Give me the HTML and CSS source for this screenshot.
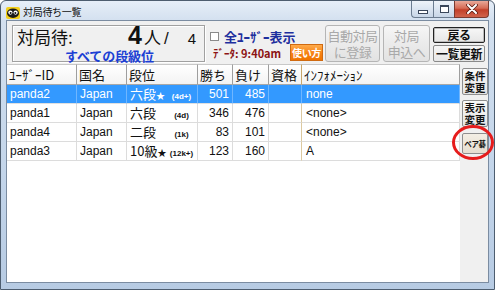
FILE: index.html
```html
<!DOCTYPE html>
<html lang="ja">
<head>
<meta charset="utf-8">
<title>対局待ち一覧</title>
<link rel="stylesheet" href="styles.css">
</head>
<body>
<div class="window">
  <div class="titlebar">
    <div class="app-icon">
      <svg width="14" height="12" viewBox="0 0 14 12">
        <rect x="0" y="0" width="14" height="12" rx="2" fill="#f2cf1c"/>
        <ellipse cx="7" cy="6.2" rx="6" ry="4.8" fill="#1a1a1a"/>
        <circle cx="4.4" cy="5.6" r="2.1" fill="#fff"/>
        <circle cx="9.6" cy="5.6" r="2.1" fill="#fff"/>
        <circle cx="4.6" cy="5.9" r="1" fill="#111"/>
        <circle cx="9.4" cy="5.9" r="1" fill="#111"/>
      </svg>
    </div>
    <div class="title">対局待ち一覧</div>
    <div class="caption-btns">
      <div class="cbtn cmin"><span class="min-glyph"></span></div>
      <div class="cbtn cmax"><span class="max-glyph"></span></div>
      <div class="cbtn cclose">
        <svg width="12" height="10" viewBox="0 0 12 10">
          <path d="M2 1 L10 9 M10 1 L2 9" stroke="#5a1c14" stroke-width="3.6" stroke-linecap="round"/>
          <path d="M2 1 L10 9 M10 1 L2 9" stroke="#fff" stroke-width="2" stroke-linecap="round"/>
        </svg>
      </div>
    </div>
  </div>

  <div class="client">
    <div class="toppanel">
      <div class="waitbox">
        <div class="waitline">
          <span class="wl">対局待:</span>
          <span class="count">4</span>
          <span class="nin">人</span>
          <span class="slash">/</span>
          <span class="total">4</span>
        </div>
        <div class="alldan">すべての段級位</div>
      </div>
      <div class="options">
        <div class="chk"><span class="box"></span><span class="chk-label">全ﾕｰｻﾞｰ表示</span></div>
        <div class="dataline">
          <span class="datatime">ﾃﾞｰﾀ: 9:40am</span>
          <span class="howto">使い方</span>
        </div>
      </div>
      <div class="bigbtn auto">自動対局<br>に登録</div>
      <div class="bigbtn apply">対局<br>申込へ</div>
      <div class="stack">
        <div class="sbtn default">戻る</div>
        <div class="sbtn">一覧更新</div>
      </div>
    </div>

    <div class="main">
      <div class="grid">
        <div class="row head">
          <div class="c">ﾕｰｻﾞｰID</div>
          <div class="c">国名</div>
          <div class="c">段位</div>
          <div class="c">勝ち</div>
          <div class="c">負け</div>
          <div class="c q">資格</div>
          <div class="c">ｲﾝﾌｫﾒｰｼｮﾝ</div>
        </div>
        <div class="row sel">
          <div class="c">panda2</div>
          <div class="c">Japan</div>
          <div class="c dan"><span class="dn">六段<span class="star">★</span></span><span class="kyu">(4d+)</span></div>
          <div class="c num">501</div>
          <div class="c num">485</div>
          <div class="c q"></div>
          <div class="c info">none</div>
        </div>
        <div class="row">
          <div class="c">panda1</div>
          <div class="c">Japan</div>
          <div class="c dan"><span class="dn">六段</span><span class="kyu">(4d)</span></div>
          <div class="c num">346</div>
          <div class="c num">476</div>
          <div class="c q"></div>
          <div class="c info">&lt;none&gt;</div>
        </div>
        <div class="row">
          <div class="c">panda4</div>
          <div class="c">Japan</div>
          <div class="c dan"><span class="dn">二段</span><span class="kyu">(1k)</span></div>
          <div class="c num">83</div>
          <div class="c num">101</div>
          <div class="c q"></div>
          <div class="c info">&lt;none&gt;</div>
        </div>
        <div class="row">
          <div class="c">panda3</div>
          <div class="c">Japan</div>
          <div class="c dan"><span class="dn">10級<span class="star">★</span></span><span class="kyu">(12k+)</span></div>
          <div class="c num">123</div>
          <div class="c num">160</div>
          <div class="c q"></div>
          <div class="c info">A</div>
        </div>
      </div>
      <div class="side">
        <div class="sidebtn"><span class="sbt">条件<br>変更</span></div>
        <div class="sidebtn"><span class="sbt">表示<br>変更</span></div>
        <div class="sidebtn pair"><span class="sbt">ペア碁</span></div>
      </div>
    </div>
  </div>
</div>
<div class="mark"></div>
</body>
</html>
```

FILE: styles.css
```css
html, body {
  margin: 0;
  padding: 0;
}
body {
  width: 495px;
  height: 290px;
  overflow: hidden;
  background: #ffffff;
  position: relative;
  font-family: "Noto Sans CJK JP", "Liberation Sans", sans-serif;
}

.window {
  box-sizing: border-box;
  width: 495px;
  height: 290px;
  border: 1px solid #4d5d6f;
  border-radius: 6px 6px 0 0;
  background: linear-gradient(to bottom, #e6eef8 0px, #d3e0ef 20px, #c3d5ea 60%, #b7cbe3 100%);
  padding: 0 5px 6px 5px;
  display: flex;
  flex-direction: column;
}

/* ---- title bar ---- */
.titlebar {
  height: 19px;
  display: flex;
  align-items: flex-start;
  flex: none;
}
.app-icon {
  margin-top: 6px;
  width: 14px;
  height: 12px;
  line-height: 0;
}
.title {
  margin-left: 3px;
  margin-top: 4px;
  font-size: 10px;
  line-height: 14px;
  color: #111;
  letter-spacing: -0.3px;
}
.caption-btns {
  margin-left: auto;
  display: flex;
  height: 17px;
}
.cbtn {
  box-sizing: border-box;
  height: 17px;
  border: 1px solid #6b7c90;
  border-top: none;
  display: flex;
  align-items: center;
  justify-content: center;
}
.cmin {
  width: 22px;
  border-radius: 0 0 0 4px;
  background: linear-gradient(to bottom, #eef3f9, #dbe5f1 50%, #c8d6e7);
  border-right: none;
}
.cmax {
  width: 21px;
  background: linear-gradient(to bottom, #eef3f9, #dbe5f1 50%, #c8d6e7);
  border-right: none;
}
.cclose {
  width: 35px;
  border-radius: 0 0 4px 0;
  border-color: #7a3a30;
  background: linear-gradient(to bottom, #e9a899, #d66b55 45%, #c2402a 55%, #d0634c);
}
.min-glyph {
  width: 8px;
  height: 2px;
  margin-top: 5px;
  background: #fff;
  border: 1px solid #39465a;
}
.max-glyph {
  box-sizing: border-box;
  width: 9px;
  height: 8px;
  border: 1px solid #39465a;
  border-top-width: 2px;
  background: #fff;
  box-shadow: inset 0 0 0 1px #fff;
}

/* ---- client ---- */
.client {
  flex: 1;
  border: 1px solid #7b8ca1;
  background: #f0f0f0;
  display: flex;
  flex-direction: column;
  min-height: 0;
}

.toppanel {
  box-sizing: border-box;
  height: 43px;
  padding: 4px 0 0 5px;
  display: flex;
  align-items: flex-start;
  flex: none;
}

.waitbox {
  box-sizing: border-box;
  width: 193px;
  height: 37px;
  border: 1px solid #a0a0a0;
  box-shadow: inset 1px 1px 0 #ffffff, 1px 1px 0 #ffffff;
  background: #f0f0f0;
}
.waitline {
  display: flex;
  align-items: baseline;
  height: 22px;
  padding-left: 4px;
  color: #111;
}
.wl {
  width: 111px;
  font-size: 17px;
  line-height: 22px;
}
.count {
  font-family: "Liberation Sans", sans-serif;
  font-weight: bold;
  font-size: 25px;
  line-height: 18px;
}
.nin {
  margin-left: 2px;
  font-size: 17px;
  line-height: 22px;
}
.slash {
  margin-left: 3px;
  font-family: "Liberation Sans", sans-serif;
  font-size: 17px;
  line-height: 22px;
}
.total {
  margin-left: 19px;
  font-family: "Liberation Sans", sans-serif;
  font-size: 15px;
  line-height: 22px;
}
.alldan {
  margin-left: 52px;
  margin-top: 1px;
  font-size: 13px;
  font-weight: bold;
  line-height: 13px;
  color: #1c3fd4;
  letter-spacing: -0.1px;
}

.options {
  width: 113px;
  margin-left: 5px;
}
.chk {
  margin-top: 5px;
  display: flex;
  align-items: center;
  height: 13px;
}
.box {
  box-sizing: border-box;
  width: 9px;
  height: 9px;
  border: 1px solid #8a8a8a;
  background: #fff;
}
.chk-label {
  margin-left: 5px;
  font-size: 13px;
  font-weight: bold;
  color: #1e2f9e;
  line-height: 13px;
}
.dataline {
  display: flex;
  align-items: center;
  margin-top: 1px;
  height: 17px;
}
.datatime {
  margin-left: 3px;
  font-size: 11px;
  font-weight: bold;
  color: #8c1414;
  line-height: 12px;
  white-space: nowrap;
}
.howto {
  margin-left: auto;
  box-sizing: border-box;
  width: 33px;
  height: 17px;
  border: 1px solid #d06a10;
  background: linear-gradient(to bottom, #ffab4a, #f78214 55%, #f07400);
  color: #fff;
  font-size: 10px;
  font-weight: bold;
  line-height: 15px;
  text-align: center;
  letter-spacing: -0.3px;
  white-space: nowrap;
}

.bigbtn {
  box-sizing: border-box;
  height: 37px;
  border: 1px solid #b5b5b5;
  border-radius: 3px;
  background: linear-gradient(to bottom, #f6f6f6, #ebebeb 50%, #e2e2e2);
  color: #a9a9a9;
  font-size: 13px;
  line-height: 16px;
  text-align: center;
  padding-top: 2px;
  letter-spacing: -0.5px;
  white-space: nowrap;
}
.bigbtn.auto {
  width: 55px;
  margin-left: 2px;
}
.bigbtn.apply {
  width: 47px;
  margin-left: 3px;
}
.stack {
  width: 52px;
  margin-left: 3px;
  padding-top: 2px;
  display: flex;
  flex-direction: column;
  gap: 2px;
}
.sbtn {
  box-sizing: border-box;
  height: 17px;
  border: 1px solid #8a8a8a;
  border-radius: 2px;
  background: linear-gradient(to bottom, #f7f7f7, #e6e6e6);
  color: #111;
  font-size: 12px;
  font-weight: bold;
  line-height: 15px;
  text-align: center;
  letter-spacing: -0.5px;
  white-space: nowrap;
}
.sbtn.default {
  height: 16px;
  border: 1px solid #222;
  box-shadow: inset 0 0 0 1px #bcbcbc;
  line-height: 14px;
}

/* ---- main area ---- */
.main {
  flex: 1;
  display: flex;
  min-height: 0;
}
.grid {
  width: 453px;
  background: #fff;
  flex: none;
}
.row {
  display: grid;
  grid-template-columns: 70px 50px 71px 35px 36px 33px 158px;
  height: 19px;
}
.row .c {
  box-sizing: border-box;
  border-right: 1px solid #dcdcdc;
  border-bottom: 1px solid #dcdcdc;
  padding-left: 3px;
  font-family: "Liberation Sans", sans-serif;
  font-size: 12px;
  line-height: 18px;
  color: #111;
  white-space: nowrap;
  overflow: hidden;
}
.row .c.q {
  border-right-color: #dcc9a0;
}
.row.head {
  height: 21px;
}
.row.head .c {
  font-family: "Noto Sans CJK JP", sans-serif;
  font-size: 13px;
  line-height: 19px;
  padding-left: 2px;
  background: linear-gradient(to bottom, #ffffff, #f3f3f3);
  border-right-color: #9e9e9e;
  border-bottom-color: #a8a8a8;
  border-top: 1px solid #c8c8c8;
}
.row.head .c.q {
  border-right-color: #c9a76a;
}
.row.sel .c {
  background: #3399ff;
  color: #fff;
  border-right-color: #6fb6ff;
  border-bottom-color: #e0e0e0;
}
.row .c.num {
  text-align: right;
  padding-left: 0;
  padding-right: 3px;
}
.row .c.info {
  padding-left: 4px;
}
.row .c.dan {
  display: flex;
  align-items: baseline;
}
.dn {
  width: 37px;
  font-family: "Noto Sans CJK JP", sans-serif;
  font-size: 13px;
  line-height: 18px;
}
.star {
  font-size: 9px;
}
.kyu {
  width: 29px;
  text-align: center;
  font-family: "Liberation Sans", sans-serif;
  font-weight: bold;
  font-size: 8px;
}

.side {
  flex: 1;
  background: #f0f0f0;
  padding: 4px 0 0 2px;
  display: flex;
  flex-direction: column;
  gap: 5px;
}
.sidebtn {
  box-sizing: border-box;
  width: 26px;
  height: 27px;
  border: 1px solid #8e8e8e;
  border-radius: 2px;
  background: linear-gradient(to bottom, #fafafa, #e4e4e4);
  color: #111;
  display: flex;
  align-items: center;
  justify-content: center;
}
.sbt {
  display: block;
  font-size: 10.5px;
  font-weight: bold;
  line-height: 12px;
  text-align: center;
  white-space: nowrap;
}
.sidebtn.pair {
  height: 21px;
  margin-top: 1px;
  background: linear-gradient(to bottom, #f3eee4, #e6ded0);
}
.sidebtn.pair .sbt {
  font-size: 7.5px;
  line-height: 10px;
  letter-spacing: -0.4px;
}

/* red annotation ring over the ペア碁 button */
.mark {
  position: absolute;
  left: 452px;
  top: 125px;
  width: 42px;
  height: 35px;
  box-sizing: border-box;
  border: 3px solid #e61c1c;
  border-radius: 50%;
}
```
